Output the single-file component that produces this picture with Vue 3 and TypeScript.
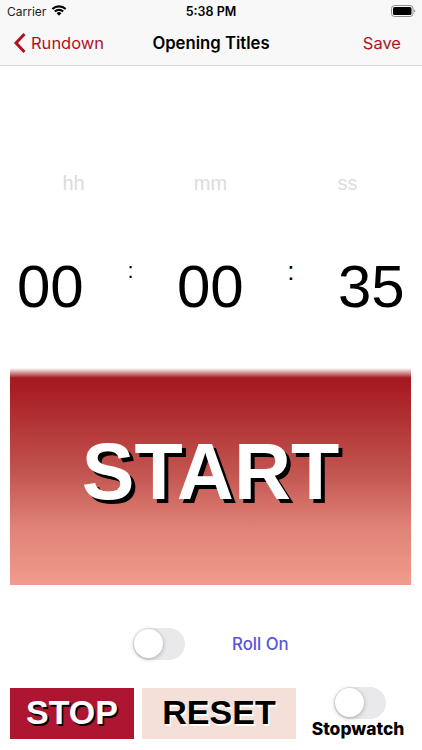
<script setup lang="ts">
interface Unit { label: string; value: string }
const units: Unit[] = [
  { label: 'hh', value: '00' },
  { label: 'mm', value: '00' },
  { label: 'ss', value: '35' },
]
</script>

<template>
  <div class="screen">
    <header class="top">
      <div class="status">
        <div class="status-left">
          <span>Carrier</span>
          <svg width="16" height="12" viewBox="0 0 16 12" class="wifi">
            <path d="M0.6 4.2 A10.6 10.6 0 0 1 15.4 4.2 L13.9 5.8 A8.4 8.4 0 0 0 2.1 5.8 Z" fill="#000" />
            <path d="M3.1 6.7 A7 7 0 0 1 12.9 6.7 L11.4 8.3 A4.8 4.8 0 0 0 4.6 8.3 Z" fill="#000" />
            <path d="M5.6 9.2 A3.4 3.4 0 0 1 10.4 9.2 L8 11.7 Z" fill="#000" />
          </svg>
        </div>
        <span class="clock">5:38 PM</span>
        <div class="status-right">
          <svg width="25" height="12" viewBox="0 0 25 12">
            <rect x="0.5" y="0.5" width="21.5" height="11" rx="3" fill="none" stroke="#8e8e8e" />
            <rect x="2" y="2" width="18.5" height="8" rx="1.6" fill="#000" />
            <path d="M23.2 4.2 A2 2 0 0 1 23.2 7.8 Z" fill="#8e8e8e" />
          </svg>
        </div>
      </div>
      <nav class="nav">
        <div class="back">
          <svg width="14" height="22" viewBox="0 0 14 22">
            <path d="M11.5 2 L3 11 L11.5 20" fill="none" stroke="#b0121f" stroke-width="3" />
          </svg>
          <span>Rundown</span>
        </div>
        <span class="title">Opening Titles</span>
        <span class="save">Save</span>
      </nav>
    </header>

    <section class="timer">
      <div class="labels">
        <span v-for="u in units" :key="u.label">{{ u.label }}</span>
      </div>
      <div class="digits">
        <template v-for="(u, i) in units" :key="u.label">
          <span class="digit">{{ u.value }}</span>
          <span v-if="i < units.length - 1" class="sep" :class="{ strong: i === 1 }">:</span>
        </template>
      </div>
    </section>

    <button class="start" type="button">START</button>

    <div class="roll">
      <span class="switch" />
      <span class="roll-label">Roll On</span>
    </div>

    <div class="actions">
      <button class="stop" type="button">STOP</button>
      <button class="reset" type="button">RESET</button>
      <div class="watch">
        <span class="switch" />
        <span class="watch-label">Stopwatch</span>
      </div>
    </div>
  </div>
</template>

<style>
html, body { margin: 0; background: #fff; }
</style>

<style scoped>
.screen {
  width: 422px;
  height: 750px;
  overflow: hidden;
  background: #fff;
  font-family: "Liberation Sans", Arial, sans-serif;
  color: #000;
  display: flex;
  flex-direction: column;
}
.top {
  height: 65px;
  background: #f8f8f8;
  border-bottom: 1px solid #d9d9d9;
  flex: none;
}
.status {
  height: 22px;
  display: grid;
  grid-template-columns: 1fr auto 1fr;
  align-items: center;
  padding: 0 7px;
  font-family: Inter, sans-serif;
  font-size: 12px;
}
.status-left { display: flex; align-items: center; gap: 5px; color: #222; }
.wifi { margin-top: -3px; }
.clock { font-weight: 600; font-size: 12.5px; }
.status-right { display: flex; justify-content: flex-end; margin-right: -1px; }
.nav {
  height: 41px;
  padding: 0 13px 2px;
  display: grid;
  grid-template-columns: 1fr auto 1fr;
  align-items: center;
  font-family: Inter, sans-serif;
  font-size: 16.5px;
}
.back { display: flex; align-items: center; gap: 4px; color: #b0121f; }
.title { font-weight: 600; font-size: 16.7px; }
.save { color: #b0121f; text-align: right; padding-right: 8px; }

.timer { flex: none; height: 302px; }
.labels {
  padding-top: 106px;
  display: grid;
  grid-template-columns: repeat(3, 1fr);
  width: 416px;
  padding-left: 5px;
  box-sizing: border-box;
  text-align: center;
  font-size: 20px;
  line-height: 22px;
  color: #dcdcdc;
}
.digits {
  margin-top: 58px;
  padding: 0 17px;
  display: flex;
  justify-content: space-between;
  align-items: flex-start;
  font-size: 60px;
  line-height: 70px;
}
.digit { width: 67px; }
.sep {
  font-size: 22px;
  line-height: 26px;
  margin-top: 6px;
}
.sep.strong { font-size: 26px; line-height: 28px; margin-top: 5px; }

.start {
  flex: none;
  display: block;
  margin: 0 10px;
  width: 401px;
  height: 217px;
  padding: 0 0 10px;
  border: 0;
  font-family: inherit;
  font-weight: 700;
  font-size: 79px;
  color: #fff;
  text-shadow: 4px 4px 0 #000;
  background: linear-gradient(to bottom, rgba(165, 25, 31, 0) 0, #a5191f 10px, #a81d23 20px, #c25550 105px, #e08377 160px, #f09c8d 217px);
}

.roll {
  flex: none;
  margin-top: 43px;
  display: flex;
  align-items: center;
  padding-left: 133px;
  gap: 47px;
  height: 32px;
}
.roll-label {
  font-family: Inter, sans-serif;
  font-size: 16.8px;
  font-weight: 500;
  color: #5856d6;
}
.switch {
  display: block;
  box-sizing: border-box;
  width: 52px;
  height: 32px;
  border-radius: 16px;
  background: #e9e9eb;
  position: relative;
}
.switch::after {
  content: "";
  position: absolute;
  left: 1px;
  top: 1px;
  width: 29px;
  height: 29px;
  border-radius: 50%;
  background: #fff;
  box-shadow: 0 1px 4px rgba(0, 0, 0, 0.3);
}

.actions {
  flex: none;
  margin-top: 28px;
  padding-left: 10px;
  display: flex;
  align-items: flex-start;
  gap: 8px;
}
.actions button {
  height: 51px;
  padding: 0 0 2px;
  border: 0;
  font-family: inherit;
  font-weight: 700;
  font-size: 34px;
}
.stop {
  width: 124px;
  background: #ad1530;
  color: #fff;
  text-shadow: 1.5px 1.5px 0 #000;
}
.reset {
  width: 154px;
  background: #f5dfd9;
  color: #000;
  text-shadow: 1.5px 1.5px 0 #fff;
}
.watch {
  width: 100px;
  margin-left: 4px;
  margin-top: -1px;
  display: flex;
  flex-direction: column;
  align-items: center;
}
.watch .switch { margin-left: 3px; }
.watch-label {
  font-family: Inter, sans-serif;
  font-weight: 800;
  font-size: 17.4px;
  line-height: 20px;
  white-space: nowrap;
}
</style>
